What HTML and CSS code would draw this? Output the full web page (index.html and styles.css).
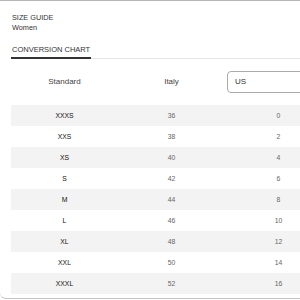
FILE: index.html
```html
<!DOCTYPE html>
<html>
<head>
<meta charset="utf-8">
<link rel="stylesheet" href="styles.css">
</head>
<body>
<div class="modal">
  <div class="head">
    <div class="title">SIZE GUIDE</div>
    <div class="sub">Women</div>
  </div>
  <div class="tabs">
    <div class="tab active">CONVERSION CHART</div>
  </div>
  <div class="table">
    <div class="hrow">
      <div class="hcell">Standard</div>
      <div class="hcell">Italy</div>
      <div class="hcell sel"><div class="select">US</div></div>
    </div>
    <div class="row alt"><div class="c size">XXXS</div><div class="c">36</div><div class="c">0</div></div>
    <div class="row"><div class="c size">XXS</div><div class="c">38</div><div class="c">2</div></div>
    <div class="row alt"><div class="c size">XS</div><div class="c">40</div><div class="c">4</div></div>
    <div class="row"><div class="c size">S</div><div class="c">42</div><div class="c">6</div></div>
    <div class="row alt"><div class="c size">M</div><div class="c">44</div><div class="c">8</div></div>
    <div class="row"><div class="c size">L</div><div class="c">46</div><div class="c">10</div></div>
    <div class="row alt"><div class="c size">XL</div><div class="c">48</div><div class="c">12</div></div>
    <div class="row"><div class="c size">XXL</div><div class="c">50</div><div class="c">14</div></div>
    <div class="row alt"><div class="c size">XXXL</div><div class="c">52</div><div class="c">16</div></div>
  </div>
</div>
</body>
</html>
```
FILE: styles.css
```css
html, body {
  margin: 0;
  padding: 0;
  background: #fff;
}
body {
  width: 300px;
  height: 300px;
  overflow: hidden;
  font-family: "Liberation Sans", Arial, sans-serif;
  color: #333;
}
.modal {
  box-sizing: border-box;
  height: 299px;
  border-top: 1px solid #b5b5b5;
  border-bottom: 1px solid #c4c4c4;
  border-bottom-left-radius: 6px;
  padding-left: 11px;
  overflow: hidden;
}
.head {
  padding-top: 12px;
  padding-left: 1px;
}
.title, .sub {
  font-size: 7.3px;
  line-height: 10px;
  color: #333;
}
.tabs {
  margin-top: 12px;
  border-bottom: 1px solid #e6e6e6;
  display: flex;
}
.tab {
  font-size: 7.5px;
  line-height: 10px;
  padding: 0 1px 2px 1px;
  color: #333;
}
.tab.active {
  border-bottom: 2px solid #333;
  margin-bottom: -1px;
}
.table {
  margin-top: 12px;
  width: 321px;
}
.hrow, .row {
  display: grid;
  grid-template-columns: 107px 107px 107px;
}
.hrow {
  height: 22px;
  margin-bottom: 12px;
}
.hcell {
  font-size: 8px;
  line-height: 22px;
  text-align: center;
  color: #444;
}
.hcell.sel {
  text-align: left;
  padding-left: 2px;
}
.select {
  box-sizing: border-box;
  height: 22px;
  border: 1px solid #aaa;
  border-radius: 4px;
  padding-left: 7px;
  line-height: 20px;
  font-size: 8px;
  color: #333;
  width: 110px;
}
.row {
  height: 21px;
}
.row.alt {
  background: #f3f3f3;
}
.c {
  font-size: 6.8px;
  line-height: 21px;
  text-align: center;
  color: #666;
}
.c.size {
  color: #111;
  font-size: 6.8px;
}
```
